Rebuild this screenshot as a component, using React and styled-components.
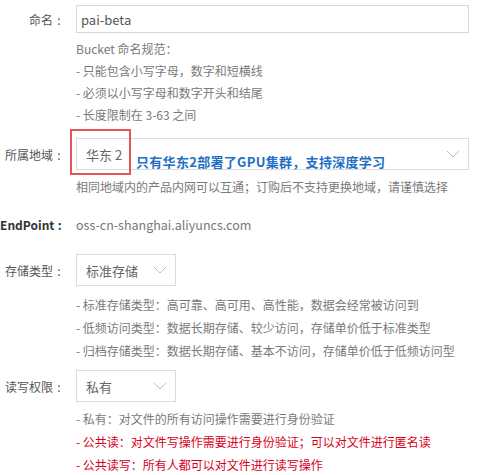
import React from "react";
import styled, { createGlobalStyle } from "styled-components";

const GlobalStyle = createGlobalStyle`
  html, body {
    margin: 0;
    padding: 0;
    background: #fff;
  }
  body {
    font-family: "Noto Sans CJK SC", "Noto Sans", sans-serif;
    font-size: 12px;
    color: #666;
  }
`;

const Form = styled.div`
  width: 477px;
  padding-top: 5px;
`;

const Row = styled.div`
  display: grid;
  grid-template-columns: 64px 1fr;
  column-gap: 12px;
  align-items: center;
  margin-top: ${(p) => p.mt || 0}px;
  position: relative;
`;

const Label = styled.div`
  display: flex;
  justify-content: flex-end;
  align-items: center;
  font-size: 12px;
  color: ${(p) => (p.bold ? "#333" : "#555")};
  font-weight: ${(p) => (p.bold ? 700 : 400)};
  white-space: nowrap;
`;

const Colon = styled.span`
  width: 10px;
  margin-left: 1px;
  text-align: center;
`;

const Input = styled.div`
  box-sizing: border-box;
  width: 393px;
  height: 28px;
  border: 1px solid #d6d6d6;
  padding-left: 4px;
  display: flex;
  align-items: center;
  font-size: 13px;
  color: #555;
`;

const Select = styled.div`
  box-sizing: border-box;
  width: ${(p) => p.w}px;
  height: ${(p) => p.h || 32}px;
  border: 1px solid #dcdcdc;
  padding: 0 8px 0 9px;
  display: flex;
  align-items: center;
  justify-content: space-between;
  font-size: 13px;
  color: #666;
`;

const Help = styled.div`
  margin-left: 76px;
  margin-top: ${(p) => p.mt || 0}px;
  line-height: ${(p) => p.lh || 22}px;
  font-size: 12px;
  color: #7a7a7a;
`;

const Line = styled.div`
  color: ${(p) => (p.red ? "#d9001b" : "#7a7a7a")};
  white-space: nowrap;
`;

const Value = styled.div`
  font-size: 12.5px;
  color: #777;
  height: 30px;
  display: flex;
  align-items: center;
`;

const Highlight = styled.div`
  position: absolute;
  left: 70px;
  top: -9px;
  width: 61px;
  height: 46px;
  box-sizing: border-box;
  border: 2px solid #e25656;
`;

const Note = styled.div`
  position: absolute;
  left: 136px;
  top: 14px;
  font-size: 13px;
  font-weight: 700;
  color: #1f6fc5;
  white-space: nowrap;
  letter-spacing: 0.3px;
`;

const Chevron = () => (
  <svg width="14" height="8" viewBox="0 0 14 8">
    <polyline points="1,1 7,7 13,1" fill="none" stroke="#bdbdbd" strokeWidth="1" />
  </svg>
);

const FieldLabel = ({ children, bold }) => (
  <Label bold={bold}>
    {children}
    <Colon>:</Colon>
  </Label>
);

export default function App() {
  return (
    <>
      <GlobalStyle />
      <Form>
        <Row>
          <FieldLabel>命名</FieldLabel>
          <Input>pai-beta</Input>
        </Row>
        <Help mt={5}>
          <Line>Bucket 命名规范：</Line>
          <Line>- 只能包含小写字母，数字和短横线</Line>
          <Line>- 必须以小写字母和数字开头和结尾</Line>
          <Line>- 长度限制在 3-63 之间</Line>
        </Help>

        <Row mt={12}>
          <FieldLabel>所属地域</FieldLabel>
          <Select w={393} h={32}>
            <span>华东 2</span>
            <Chevron />
          </Select>
          <Highlight />
          <Note>只有华东2部署了GPU集群，支持深度学习</Note>
        </Row>
        <Help mt={6}>
          <Line>相同地域内的产品内网可以互通；订购后不支持更换地域，请谨慎选择</Line>
        </Help>

        <Row mt={11}>
          <FieldLabel bold>EndPoint</FieldLabel>
          <Value>oss-cn-shanghai.aliyuncs.com</Value>
        </Row>

        <Row mt={15}>
          <FieldLabel>存储类型</FieldLabel>
          <Select w={100} h={32}>
            <span>标准存储</span>
            <Chevron />
          </Select>
        </Row>
        <Help mt={7} lh={23}>
          <Line>- 标准存储类型：高可靠、高可用、高性能，数据会经常被访问到</Line>
          <Line>- 低频访问类型：数据长期存储、较少访问，存储单价低于标准类型</Line>
          <Line>- 归档存储类型：数据长期存储、基本不访问，存储单价低于低频访问型</Line>
        </Help>

        <Row mt={8}>
          <FieldLabel>读写权限</FieldLabel>
          <Select w={100} h={32}>
            <span>私有</span>
            <Chevron />
          </Select>
        </Row>
        <Help mt={5} lh={23}>
          <Line>- 私有：对文件的所有访问操作需要进行身份验证</Line>
          <Line red>- 公共读：对文件写操作需要进行身份验证；可以对文件进行匿名读</Line>
          <Line red>- 公共读写：所有人都可以对文件进行读写操作</Line>
        </Help>
      </Form>
    </>
  );
}
